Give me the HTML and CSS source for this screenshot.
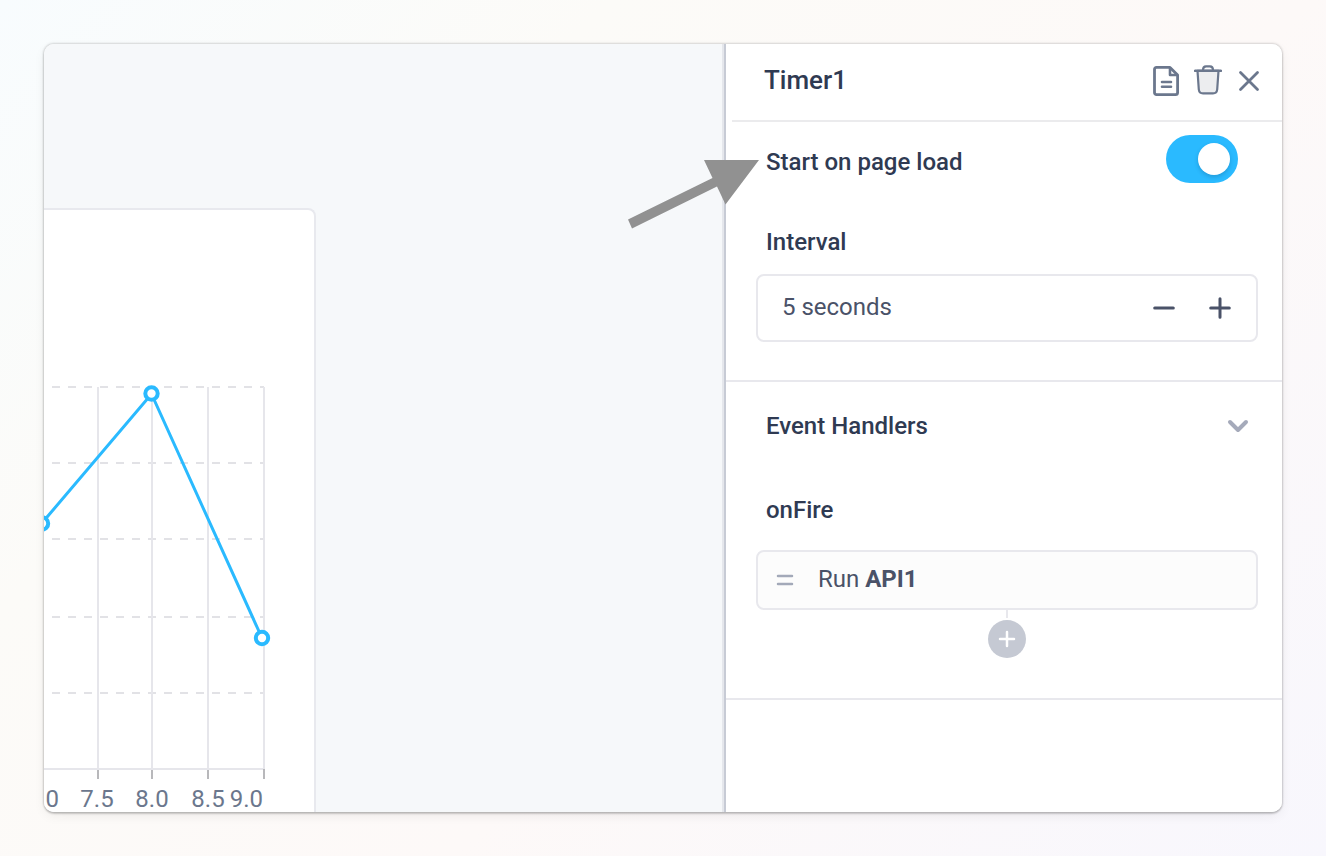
FILE: index.html
```html
<!DOCTYPE html>
<html lang="en">
<head>
  <meta charset="UTF-8">
  <meta name="viewport" content="width=device-width, initial-scale=1.0">
  <title>Timer1</title>
  <link rel="stylesheet" href="styles.css">
</head>
<body>
  <div class="editor">
    <main class="canvas">
      <div class="chart-card">
        <svg class="chart" width="270" height="602" viewBox="44 210 270 602">
          <g class="grid-dashed">
            <path d="M52 387H264M52 463H264M52 539H264M52 617H264M52 693H264"/>
          </g>
          <path class="grid" d="M98 387V769M152 387V769M208 387V769M264 387V769M44 769H265"/>
          <path class="ticks" d="M98 770V779M152 770V779M208 770V779M264 769V779"/>
          <path class="line" d="M42 523L151.500 394L262 638"/>
          <g class="points">
            <circle cx="42" cy="523.500" r="6.200"/>
            <circle cx="151.500" cy="393.500" r="6.200"/>
            <circle cx="262" cy="638" r="6.200"/>
          </g>
          <g class="labels">
            <text x="59" y="807" text-anchor="end">0</text>
            <text x="97" y="807" text-anchor="middle">7.5</text>
            <text x="152" y="807" text-anchor="middle">8.0</text>
            <text x="208" y="807" text-anchor="middle">8.5</text>
            <text x="263" y="807" text-anchor="end">9.0</text>
          </g>
        </svg>
      </div>
    </main>

    <aside class="panel">
      <header class="panel-header">
        <h1>Timer1</h1>
        <div class="actions">
          <button class="icon-btn" aria-label="Documentation">
            <svg width="28" height="32" viewBox="0 0 28 32" fill="none" stroke="#6b778d" stroke-width="2.800" stroke-linejoin="round">
              <path d="M4.500 3.400H18L25.600 11V28.500Q25.600 30.600 23.500 30.600H4.600Q2.500 30.600 2.500 28.500V5.400Q2.500 3.400 4.500 3.400Z"/>
              <path d="M18 3.500V11H25.500" stroke-width="2.600"/>
              <path d="M10 18H19M10 22.700H19" stroke-linecap="round" stroke-width="2.600"/>
            </svg>
          </button>
          <button class="icon-btn" aria-label="Delete">
            <svg width="28" height="32" viewBox="0 0 28 32" fill="none" stroke="#6b778d" stroke-width="2.200" stroke-linejoin="round">
              <path d="M3.500 6.800L4.800 25.500Q5.200 29.400 9 29.400H19Q22.800 29.400 23.200 25.500L24.500 6.800Z" fill="#ecedef"/>
              <path d="M1.200 6.800H26.800" stroke-linecap="round" stroke-width="2.600"/>
              <path d="M9 6Q9 2.300 12 2.300H16Q19 2.300 19 6"/>
            </svg>
          </button>
          <button class="icon-btn" aria-label="Close">
            <svg width="28" height="32" viewBox="0 0 28 32" fill="none" stroke="#6b778d" stroke-width="2.800" stroke-linecap="round">
              <path d="M4.500 8.500L21.500 25.500M21.500 8.500L4.500 25.500"/>
            </svg>
          </button>
        </div>
      </header>

      <section class="section">
        <div class="toggle-row">
          <label for="start">Start on page load</label>
          <input class="toggle" type="checkbox" id="start" checked>
        </div>
        <label class="field-label" for="interval">Interval</label>
        <div class="stepper">
          <input type="text" id="interval" value="5 seconds">
          <button class="step-btn" aria-label="Decrease">
            <svg width="24" height="24" viewBox="0 0 24 24" stroke="#4a5268" stroke-width="3" stroke-linecap="round"><path d="M2.700 12H21.300"/></svg>
          </button>
          <button class="step-btn" aria-label="Increase">
            <svg width="24" height="24" viewBox="0 0 24 24" stroke="#4a5268" stroke-width="3" stroke-linecap="round"><path d="M2.700 12H21.300M12 2.700V21.300"/></svg>
          </button>
        </div>
      </section>

      <section class="section events">
        <div class="section-title">
          <h2>Event Handlers</h2>
          <button class="icon-btn" aria-label="Collapse">
            <svg width="24" height="16" viewBox="0 0 24 16" fill="none" stroke="#a5aaba" stroke-width="4" stroke-linecap="round" stroke-linejoin="round"><path d="M4 4L12 12L20 4"/></svg>
          </button>
        </div>
        <h3>onFire</h3>
        <button class="handler">
          <svg width="18" height="12" viewBox="0 0 18 12" stroke="#a3a9b9" stroke-width="2.500" stroke-linecap="round"><path d="M2 2H16M2 10H16"/></svg>
          <span>Run <b>API1</b></span>
        </button>
        <div class="connector"></div>
        <button class="add-btn" aria-label="Add handler">
          <svg width="18" height="18" viewBox="0 0 18 18" stroke="#fff" stroke-width="2.500" stroke-linecap="round"><path d="M2 9H16M9 2V16"/></svg>
        </button>
      </section>

      <!-- pointer to the toggle -->
      <svg class="arrow" width="132" height="70" viewBox="0 0 132 70" fill="#919191">
        <path d="M131 0H76L84.500 18L0 59.500L4 68.500L89 26.500L97.500 44.500Z"/>
      </svg>
    </aside>
  </div>
</body>
</html>
```

FILE: styles.css
```css
* {
  box-sizing: border-box;
}

body {
  display: flex;
  min-height: 100vh;
  margin: 0;
  padding: 44px;
  background: linear-gradient(135deg, #f8fcfe 0%, #fcfbf8 28%, #fdf9f8 60%, #f8f7fd 100%);
  font-family: Roboto, sans-serif;
  font-size: 24px;
  line-height: 28px;
  color: #2f3a52;
}

h1, h2, h3 {
  margin: 0;
  font-size: 24px;
  font-weight: 500;
}

button {
  padding: 0;
  border: none;
  background: none;
  font: inherit;
  color: inherit;
  cursor: pointer;
}

svg {
  display: block;
}

.editor {
  display: flex;
  flex: 1;
  overflow: hidden;
  border-radius: 10px;
  background-color: #fff;
  box-shadow: 0 0 2px 1px rgba(0, 0, 0, 0.14), 0 2px 2px rgba(0, 0, 0, 0.15), 0 4px 12px rgba(0, 0, 0, 0.06);
}

.canvas {
  display: flex;
  flex: 1;
  padding-top: 164px;
  background-color: #f6f8fa;
}

/* chart */
.chart-card {
  border: 2px solid #e8e9ee;
  border-left: none;
  border-bottom: none;
  border-top-right-radius: 8px;
  background-color: #fff;
}

.chart path {
  fill: none;
  stroke-width: 2;
}

.grid-dashed {
  stroke: #e2e2e6;
  stroke-dasharray: 8 8;
}

.grid {
  stroke: #e6e6eb;
}

.ticks {
  stroke: #b8b8bb;
}

.chart .line {
  stroke: #2abaff;
  stroke-width: 3;
}

.points {
  fill: #fff;
  stroke: #2abaff;
  stroke-width: 4;
}

.labels {
  fill: #6b778d;
}

/* property panel */
.panel {
  position: relative;
  width: 558px;
  border-left: 2px solid #c7cbd5;
  background-color: #fff;
  box-shadow: -2px 0 #e5e7ec;
}

.panel-header {
  display: flex;
  justify-content: space-between;
  align-items: center;
  height: 78px;
  margin-left: 6px;
  padding: 0 18px 4px 32px;
  border-bottom: 2px solid #ebebed;
}

.panel-header h1 {
  font-size: 26px;
}

.actions {
  display: flex;
  gap: 14px;
}

.section {
  padding: 13px 24px 38px 30px;
  border-bottom: 2px solid #e8e8ed;
}

.toggle-row {
  display: flex;
  justify-content: space-between;
  align-items: center;
  padding: 0 20px 0 10px;
  margin-bottom: 45px;
  font-weight: 500;
}

.toggle-row label {
  padding-top: 6px;
}

.toggle {
  display: flex;
  justify-content: flex-end;
  align-items: center;
  width: 72px;
  height: 48px;
  margin: 0;
  padding: 8px;
  appearance: none;
  border-radius: 24px;
  background-color: #2abaff;
  cursor: pointer;
}

.toggle::before {
  content: "";
  width: 32px;
  height: 32px;
  border-radius: 50%;
  background-color: #fff;
  box-shadow: 0 2px 4px rgba(0, 35, 70, 0.2);
}

.toggle:not(:checked) {
  justify-content: flex-start;
  background-color: #c5c9d3;
}

.field-label {
  display: block;
  margin-bottom: 18px;
  padding-left: 10px;
  font-weight: 500;
}

.stepper {
  display: flex;
  align-items: center;
  gap: 32px;
  height: 68px;
  padding: 0 24px;
  border: 2px solid #e8e8ed;
  border-radius: 8px;
}

.stepper input {
  flex: 1;
  min-width: 0;
  padding: 0 0 2px;
  border: none;
  outline: none;
  background: none;
  font: inherit;
  color: #4a5268;
}

.events {
  padding-top: 30px;
  padding-bottom: 40px;
}

.section-title {
  display: flex;
  justify-content: space-between;
  align-items: center;
  padding: 0 8px 0 10px;
  margin-bottom: 56px;
}

.events h3 {
  margin-bottom: 26px;
  padding-left: 10px;
}

.handler {
  display: flex;
  align-items: center;
  gap: 24px;
  width: 100%;
  height: 60px;
  padding: 0 18px;
  border: 2px solid #e8e8ed;
  border-radius: 8px;
  background-color: #fcfcfc;
  color: #4a5268;
}

.handler span {
  padding-bottom: 2px;
}

.connector {
  width: 2px;
  height: 8px;
  margin: 0 auto 2px;
  background-color: #e8e8ed;
}

.add-btn {
  display: flex;
  justify-content: center;
  align-items: center;
  width: 38px;
  height: 38px;
  margin: 0 auto;
  border-radius: 50%;
  background-color: #c5c9d3;
}

.arrow {
  position: absolute;
  top: 116px;
  left: -98px;
}
```
